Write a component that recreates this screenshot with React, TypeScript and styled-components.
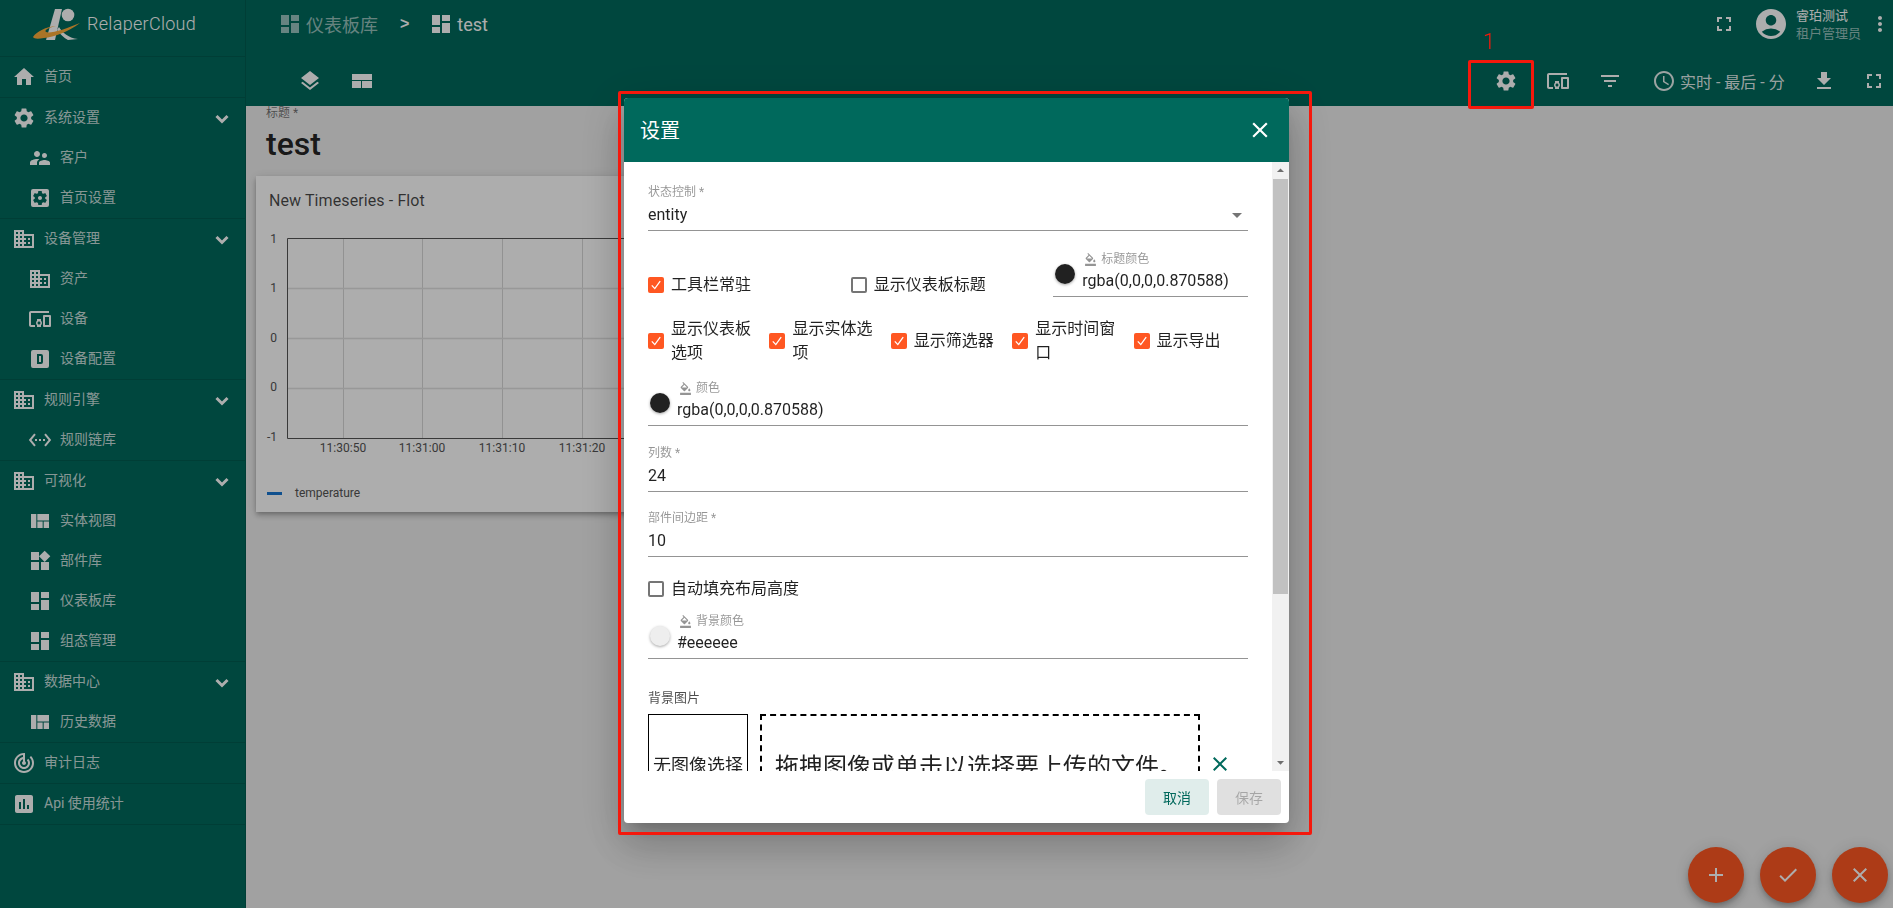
import React from 'react';
import styled, { createGlobalStyle } from 'styled-components';
import {
  MdHome, MdSettings, MdSupervisorAccount, MdSettingsApplications, MdBusiness, MdDevicesOther,
  MdSettingsEthernet, MdViewQuilt, MdWidgets, MdDashboard, MdTrackChanges, MdInsertChart,
  MdLayers, MdFullscreen, MdAccountCircle, MdMoreVert, MdFilterList, MdQueryBuilder,
  MdFileDownload, MdFormatColorFill, MdClose, MdCheck, MdAdd, MdArrowDropDown, MdArrowDropUp,
} from 'react-icons/md';

const Global = createGlobalStyle`
  html, body { margin: 0; padding: 0; height: 100%; overflow: hidden; }
  body { font-family: Roboto, "Noto Sans CJK SC", sans-serif; background: #eeeeee; }
  * { box-sizing: border-box; }
`;

const Page = styled.div`display: flex; width: 1893px; height: 908px; overflow: hidden;`;

const Sidebar = styled.aside`width: 246px; flex: none; background: #00695c; display: flex; flex-direction: column; border-right: 1px solid rgba(0,0,0,.12);`;
const Brand = styled.div`height: 57px; flex: none; display: flex; align-items: flex-start; padding: 8px 0 0 32px; gap: 7px; border-bottom: 1px solid rgba(0,0,0,.12);`;
const BrandName = styled.span`font-size: 18px; font-weight: 300; letter-spacing: .3px; color: #fff; line-height: 32px;`;
const Group = styled.div`border-bottom: 1px solid rgba(0,0,0,.12); display: flex; flex-direction: column;`;
const Row = styled.div<{ $sub?: boolean }>`
  height: 40px; display: flex; align-items: center; color: #fff; font-size: 14px;
  padding-left: ${(p) => (p.$sub ? '28px' : '12px')}; gap: 8px;
  svg { flex: none; }
`;
const RowText = styled.span`color: rgba(255,255,255,.8); padding-bottom: 5px;`;
const Chevron = styled.svg`margin-left: auto; margin-right: 16px; margin-top: 2px;`;

const Main = styled.div`flex: 1; min-width: 0; display: flex; flex-direction: column;`;
const TopBar = styled.header`height: 106px; flex: none; background: #00695c; display: flex; flex-direction: column; color: #fff;`;
const TopRow = styled.div`height: 48px; display: flex; align-items: center; padding-left: 32px;`;
const Crumb = styled.div<{ $dim?: boolean }>`
  display: flex; align-items: center; gap: 4px; font-size: 18px; font-weight: 400;
  color: ${(p) => (p.$dim ? 'rgba(255,255,255,.6)' : '#fff')};
`;
const CrumbSep = styled.span`font-size: 16px; font-weight: 700; margin: 0 20px 0 22px; font-family: "Liberation Sans", sans-serif;`;
const TopRight = styled.div`margin-left: auto; display: flex; align-items: center;`;
const TopGap = styled.span<{ $w: number }>`width: ${(p) => p.$w}px; flex: none;`;
const UserText = styled.div`font-size: 13px; line-height: 18px; margin-left: 7px; width: 72px; padding-top: 1px;`;
const UserRole = styled.div`color: rgba(255,255,255,.6);`;
const ToolRow = styled.div`height: 58px; padding-top: 7px; display: flex; align-items: flex-start; padding-left: 38px;`;
const ToolBtn = styled.button<{ $w?: number }>`
  appearance: none; border: 0; background: none; color: #fff; padding: 0; height: 52px; width: ${(p) => p.$w ?? 52}px;
  display: flex; align-items: center; justify-content: center; flex: none;
`;
const ToolRight = styled.div`margin-left: auto; display: flex; align-items: flex-start;`;
const TimeBtn = styled.div`height: 52px; display: flex; align-items: center; gap: 4px; font-size: 16px; color: rgba(255,255,255,.9); margin: 0 12px 0 16px; width: 134px; white-space: nowrap;`;

const Content = styled.main`flex: 1; background: #eeeeee; padding: 0 10px; overflow: hidden;`;
const TitleLabel = styled.div`font-size: 12px; line-height: 14px; color: rgba(0,0,0,.54); padding-left: 10px;`;
const TitleText = styled.div`font-size: 32px; font-weight: 500; line-height: 36px; padding-left: 10px; margin-top: 6px; color: rgba(0,0,0,.87);`;
const Card = styled.section`
  width: 400px; height: 336px; margin-top: 14px; background: #fff; display: flex; flex-direction: column;
  box-shadow: 0 2px 4px -1px rgba(0,0,0,.2), 0 4px 5px rgba(0,0,0,.14), 0 1px 10px rgba(0,0,0,.12);
`;
const CardTitle = styled.div`font-size: 16px; line-height: 20px; margin: 15px 0 -1px 13px; letter-spacing: .1px; color: rgba(0,0,0,.72);`;
const Legend = styled.div`display: flex; align-items: center; gap: 13px; padding-left: 11px; height: 24px; font-size: 12px; color: #545454;`;
const LegendMark = styled.span`width: 15px; height: 3px; background: #1976d2;`;

const Fabs = styled.div`position: fixed; right: 5px; bottom: 5px; display: flex; gap: 16px;`;
const Fab = styled.button`
  width: 56px; height: 56px; border-radius: 50%; border: 0; background: #ff5722; color: #fff; display: flex; align-items: center; justify-content: center;
  box-shadow: 0 3px 5px -1px rgba(0,0,0,.2), 0 6px 10px rgba(0,0,0,.14), 0 1px 18px rgba(0,0,0,.12); padding: 0;
`;

const Backdrop = styled.div`position: fixed; inset: 0; background: rgba(0,0,0,.32);`;
const Dialog = styled.div`
  position: fixed; left: 624px; top: 98px; width: 665px; height: 725px; background: #fff; border-radius: 4px; overflow: hidden;
  display: flex; flex-direction: column;
  box-shadow: 0 11px 15px -7px rgba(0,0,0,.2), 0 24px 38px 3px rgba(0,0,0,.14), 0 9px 46px 8px rgba(0,0,0,.12);
`;
const DialogHead = styled.div`height: 64px; flex: none; background: #00695c; color: #fff; display: flex; align-items: center; justify-content: space-between; padding: 0 16px 0 16px; font-size: 20px; font-weight: 400;`;
const DialogTitle = styled.span`padding-bottom: 2px;`;
const DialogBody = styled.div`height: 609px; flex: none; display: flex;`;
const Form = styled.div`flex: 1; min-width: 0; height: 609px; overflow: hidden; padding: 23px 24px 0 24px; color: rgba(0,0,0,.87);`;
const Track = styled.div`width: 17px; flex: none; background: #f1f1f1; display: flex; flex-direction: column; color: #6e6e6e; align-items: center;`;
const TrackArrow = styled.div`height: 17px; flex: none; display: flex; align-items: center; justify-content: center;`;
const Thumb = styled.div`width: 15px; height: 415px; background: #c1c1c1; flex: none;`;
const TrackSpace = styled.div`flex: 1;`;

const Field = styled.div<{ $mt?: number }>`margin-top: ${(p) => p.$mt ?? 0}px; padding-bottom: 3px; border-bottom: 1px solid rgba(0,0,0,.42);`;
const FieldLabel = styled.div`font-size: 12px; line-height: 14px; color: rgba(0,0,0,.42);`;
const FieldValue = styled.div`font-size: 16px; line-height: 24px; margin-top: 4px; display: flex; justify-content: space-between; align-items: center;`;
const SelectArrow = styled.span`display: flex; margin-right: -1px; color: rgba(0,0,0,.54);`;

const ColorField = styled.div<{ $mt?: number }>`margin-top: ${(p) => p.$mt ?? 0}px; display: flex; padding-bottom: 3px; border-bottom: 1px solid rgba(0,0,0,.42);`;
const Swatch = styled.span<{ $c: string }>`width: 20px; height: 20px; border-radius: 50%; flex: none; margin: 12px 7px 0 2px; background: ${(p) => p.$c}; box-shadow: 0 1px 3px rgba(0,0,0,.35);`;
const ColorCol = styled.div`min-width: 0;`;
const ColorLabel = styled.div`font-size: 12px; line-height: 14px; color: rgba(0,0,0,.42); display: flex; align-items: center; gap: 4px; margin-left: 2px;`;
const ColorValue = styled.div`font-size: 16px; line-height: 24px; margin-top: 3px;`;

const Grid3 = styled.div`display: grid; grid-template-columns: repeat(3, 1fr); column-gap: 8px; margin-top: 21px; align-items: end;`;
const Grid5 = styled.div`display: grid; grid-template-columns: repeat(5, 1fr); column-gap: 7px; margin-top: 20px; align-items: center;`;
const Check = styled.label<{ $mt?: number }>`display: flex; align-items: center; gap: 7px; font-size: 16px; line-height: 24px; margin-top: ${(p) => p.$mt ?? 0}px;`;
const Box = styled.span<{ $on?: boolean }>`
  width: 16px; height: 16px; flex: none; border-radius: 2px; display: flex; align-items: center; justify-content: center; color: #fff;
  ${(p) => (p.$on ? 'background: #ff5722;' : 'border: 2px solid rgba(0,0,0,.54);')}
`;

const ImgLabel = styled.div`font-size: 13px; line-height: 16px; color: rgba(0,0,0,.7); margin-top: 31px;`;
const ImgRow = styled.div`display: flex; margin-top: 8px; height: 100px; align-items: stretch;`;
const Preview = styled.div`width: 100px; flex: none; border: 1px solid #000; display: flex; align-items: center; justify-content: center; font-size: 18px; white-space: nowrap; color: rgba(0,0,0,.87);`;
const Drop = styled.div`width: 440px; flex: none; margin-left: 12px; border: 2px dashed #000; display: flex; align-items: center; padding-left: 13px; font-size: 24px; white-space: nowrap; overflow: hidden;`;
const DropClear = styled.div`margin-left: 8px; display: flex; align-items: center; color: #00695c;`;

const DialogFoot = styled.div`height: 52px; flex: none; display: flex; justify-content: flex-end; align-items: flex-start; gap: 8px; padding: 8px 8px 0 0;`;
const Btn = styled.button<{ $off?: boolean }>`
  width: 64px; height: 36px; border: 0; border-radius: 4px; font: 400 14px Roboto, "Noto Sans CJK SC", sans-serif;
  background: ${(p) => (p.$off ? 'rgba(0,0,0,.12)' : 'rgba(0,105,92,.12)')};
  color: ${(p) => (p.$off ? 'rgba(0,0,0,.26)' : '#00695c')};
`;

const Mark = styled.div<{ $l: number; $t: number; $w: number; $h: number }>`
  position: fixed; left: ${(p) => p.$l}px; top: ${(p) => p.$t}px; width: ${(p) => p.$w}px; height: ${(p) => p.$h}px;
  border: 3px solid #f5180c; border-radius: 2px;
`;
const MarkNum = styled.div`position: fixed; left: 1483px; top: 30px; font-size: 22px; font-weight: 300; line-height: 24px; color: #f5180c;`;

const DBox = () => (
  <svg width="24" height="24" viewBox="0 0 24 24" fill="currentColor"><path d="M9,7V17H13A2,2 0 0,0 15,15V9A2,2 0 0,0 13,7H9M11,9H13V15H11V9M5,3H19A2,2 0 0,1 21,5V19A2,2 0 0,1 19,21H5A2,2 0 0,1 3,19V5A2,2 0 0,1 5,3Z" fillRule="evenodd" /></svg>
);

const WebIcon = () => (
  <svg width="24" height="24" viewBox="0 0 24 24" fill="currentColor"><path d="M2 5h20v6H2zM2 12h9v7H2zM12 12h10v7H12z" /></svg>
);

const Tick = () => (
  <svg width="14" height="14" viewBox="0 0 14 14" fill="none" stroke="currentColor" strokeWidth="1.3"><path d="M2.8 7.4 L5.8 10.6 L11.2 3.2" /></svg>
);

const ChevronIcon = () => (
  <Chevron width="14" height="10" viewBox="0 0 14 10" fill="none" stroke="currentColor" strokeWidth="3"><path d="M1.5 2 L7 7.5 L12.5 2" /></Chevron>
);

const Logo = () => (
  <svg width="48" height="34" viewBox="0 0 48 34">
    <path d="M14 32 L23 1 L30 1 L23 32 Z" fill="#fff" />
    <circle cx="36" cy="7" r="6.3" fill="#fff" />
    <path d="M27 19 C30 24 36 30 46 31 L36 32 C32 30 28 26 25 22 Z" fill="#fff" />
    <path d="M1 29 C5 23 14 19 24 18 C16 20 12 22 14 24 C18 26 34 21 48 15 C36 24 22 29 12 30 C6 31 2 31 1 29Z" fill="#fbab3a" />
  </svg>
);

type Item = { icon: React.ReactNode; text: string };
type Sec = { icon: React.ReactNode; text: string; children?: Item[] };
const sections: Sec[] = [
  { icon: <MdHome size={24} />, text: '首页' },
  { icon: <MdSettings size={24} />, text: '系统设置', children: [
    { icon: <MdSupervisorAccount size={24} />, text: '客户' },
    { icon: <MdSettingsApplications size={24} />, text: '首页设置' },
  ] },
  { icon: <MdBusiness size={24} />, text: '设备管理', children: [
    { icon: <MdBusiness size={24} />, text: '资产' },
    { icon: <MdDevicesOther size={24} />, text: '设备' },
    { icon: <DBox />, text: '设备配置' },
  ] },
  { icon: <MdBusiness size={24} />, text: '规则引擎', children: [
    { icon: <MdSettingsEthernet size={24} />, text: '规则链库' },
  ] },
  { icon: <MdBusiness size={24} />, text: '可视化', children: [
    { icon: <MdViewQuilt size={24} />, text: '实体视图' },
    { icon: <MdWidgets size={24} />, text: '部件库' },
    { icon: <MdDashboard size={24} />, text: '仪表板库' },
    { icon: <MdDashboard size={24} />, text: '组态管理' },
  ] },
  { icon: <MdBusiness size={24} />, text: '数据中心', children: [
    { icon: <MdViewQuilt size={24} />, text: '历史数据' },
  ] },
  { icon: <MdTrackChanges size={24} />, text: '审计日志' },
  { icon: <MdInsertChart size={24} />, text: 'Api 使用统计' },
];

const Chart = () => {
  const vs = [87, 166, 246, 326];
  const hs = [78, 128, 178];
  const xl = ['11:30:50', '11:31:00', '11:31:10', '11:31:20'];
  const yl: [string, number][] = [['1', 33], ['1', 82], ['0', 132], ['0', 181], ['-1', 231]];
  return (
    <svg width="400" height="271" viewBox="0 0 400 271" style={{ flex: 'none', display: 'block' }} fontFamily="Roboto, sans-serif" fontSize="12" fill="#545454">
      {vs.map((x) => <line key={x} x1={x + .5} x2={x + .5} y1="28" y2="228" stroke="#d8d8d8" />)}
      {hs.map((y) => <line key={y} x1="31" x2="400" y1={y + .5} y2={y + .5} stroke="#e0e0e0" strokeWidth="1.4" />)}
      <path d="M31.5 228.5V28.5H400M31.5 228.5H400" fill="none" stroke="#545454" />
      {yl.map(([t, y], i) => <text key={i} x="21" y={y} textAnchor="end">{t}</text>)}
      {xl.map((t, i) => <text key={t} x={vs[i]} y="242" textAnchor="middle">{t}</text>)}
    </svg>
  );
};

const Fill = () => <MdFormatColorFill size={13} />;

export default function App() {
  return (
    <>
      <Global />
      <Page>
        <Sidebar>
          <Brand><Logo /><BrandName>RelaperCloud</BrandName></Brand>
          {sections.map((s) => (
            <Group key={s.text}>
              <Row>
                {s.icon}<RowText>{s.text}</RowText>
                {s.children && <ChevronIcon />}
              </Row>
              {s.children?.map((c) => (
                <Row $sub key={c.text}>{c.icon}<RowText>{c.text}</RowText></Row>
              ))}
            </Group>
          ))}
        </Sidebar>
        <Main>
          <TopBar>
            <TopRow>
              <Crumb $dim><MdDashboard size={24} />仪表板库</Crumb>
              <CrumbSep>&gt;</CrumbSep>
              <Crumb><MdDashboard size={24} />test</Crumb>
              <TopRight>
                <MdFullscreen size={24} />
                <TopGap $w={17} />
                <MdAccountCircle size={36} />
                <UserText>睿珀测试<UserRole>租户管理员</UserRole></UserText>
                <MdMoreVert size={24} />
                <TopGap $w={1} />
              </TopRight>
            </TopRow>
            <ToolRow>
              <ToolBtn><MdLayers size={24} /></ToolBtn>
              <ToolBtn><WebIcon /></ToolBtn>
              <ToolRight>
                <ToolBtn><MdSettings size={24} /></ToolBtn>
                <ToolBtn><MdDevicesOther size={24} /></ToolBtn>
                <ToolBtn><MdFilterList size={24} /></ToolBtn>
                <TimeBtn><MdQueryBuilder size={24} />实时 - 最后 - 分</TimeBtn>
                <ToolBtn><MdFileDownload size={24} /></ToolBtn>
                <TopGap $w={5} />
                <ToolBtn $w={38}><MdFullscreen size={24} /></ToolBtn>
              </ToolRight>
            </ToolRow>
          </TopBar>
          <Content>
            <TitleLabel>标题 *</TitleLabel>
            <TitleText>test</TitleText>
            <Card>
              <CardTitle>New Timeseries - Flot</CardTitle>
              <Chart />
              <Legend><LegendMark />temperature</Legend>
            </Card>
          </Content>
        </Main>
      </Page>
      <Fabs>
        <Fab><MdAdd size={24} /></Fab>
        <Fab><MdCheck size={24} /></Fab>
        <Fab><MdClose size={24} /></Fab>
      </Fabs>
      <Backdrop />
      <Dialog>
        <DialogHead><DialogTitle>设置</DialogTitle><MdClose size={26} /></DialogHead>
        <DialogBody>
          <Form>
            <Field>
              <FieldLabel>状态控制 *</FieldLabel>
              <FieldValue>entity<SelectArrow><MdArrowDropDown size={24} /></SelectArrow></FieldValue>
            </Field>
            <Grid3>
              <Check><Box $on><Tick /></Box>工具栏常驻</Check>
              <Check><Box />显示仪表板标题</Check>
              <ColorField>
                <Swatch $c="rgba(0,0,0,.870588)" />
                <ColorCol>
                  <ColorLabel><Fill />标题颜色</ColorLabel>
                  <ColorValue>rgba(0,0,0,0.870588)</ColorValue>
                </ColorCol>
              </ColorField>
            </Grid3>
            <Grid5>
              <Check><Box $on><Tick /></Box>显示仪表板选项</Check>
              <Check><Box $on><Tick /></Box>显示实体选项</Check>
              <Check><Box $on><Tick /></Box>显示筛选器</Check>
              <Check><Box $on><Tick /></Box>显示时间窗口</Check>
              <Check><Box $on><Tick /></Box>显示导出</Check>
            </Grid5>
            <ColorField $mt={16}>
              <Swatch $c="rgba(0,0,0,.870588)" />
              <ColorCol>
                <ColorLabel><Fill />颜色</ColorLabel>
                <ColorValue>rgba(0,0,0,0.870588)</ColorValue>
              </ColorCol>
            </ColorField>
            <Field $mt={20}>
              <FieldLabel>列数 *</FieldLabel>
              <FieldValue>24</FieldValue>
            </Field>
            <Field $mt={19}>
              <FieldLabel>部件间边距 *</FieldLabel>
              <FieldValue>10</FieldValue>
            </Field>
            <Check $mt={20}><Box />自动填充布局高度</Check>
            <ColorField $mt={13}>
              <Swatch $c="#eeeeee" />
              <ColorCol>
                <ColorLabel><Fill />背景颜色</ColorLabel>
                <ColorValue>#eeeeee</ColorValue>
              </ColorCol>
            </ColorField>
            <ImgLabel>背景图片</ImgLabel>
            <ImgRow>
              <Preview>无图像选择</Preview>
              <Drop>拖拽图像或单击以选择要上传的文件。</Drop>
              <DropClear><MdClose size={24} /></DropClear>
            </ImgRow>
          </Form>
          <Track>
            <TrackArrow><MdArrowDropUp size={17} /></TrackArrow>
            <Thumb />
            <TrackSpace />
            <TrackArrow><MdArrowDropDown size={17} /></TrackArrow>
          </Track>
        </DialogBody>
        <DialogFoot>
          <Btn>取消</Btn>
          <Btn $off>保存</Btn>
        </DialogFoot>
      </Dialog>
      <Mark $l={618} $t={91} $w={694} $h={744} />
      <Mark $l={1468} $t={60} $w={66} $h={49} />
      <MarkNum>1</MarkNum>
    </>
  );
}
